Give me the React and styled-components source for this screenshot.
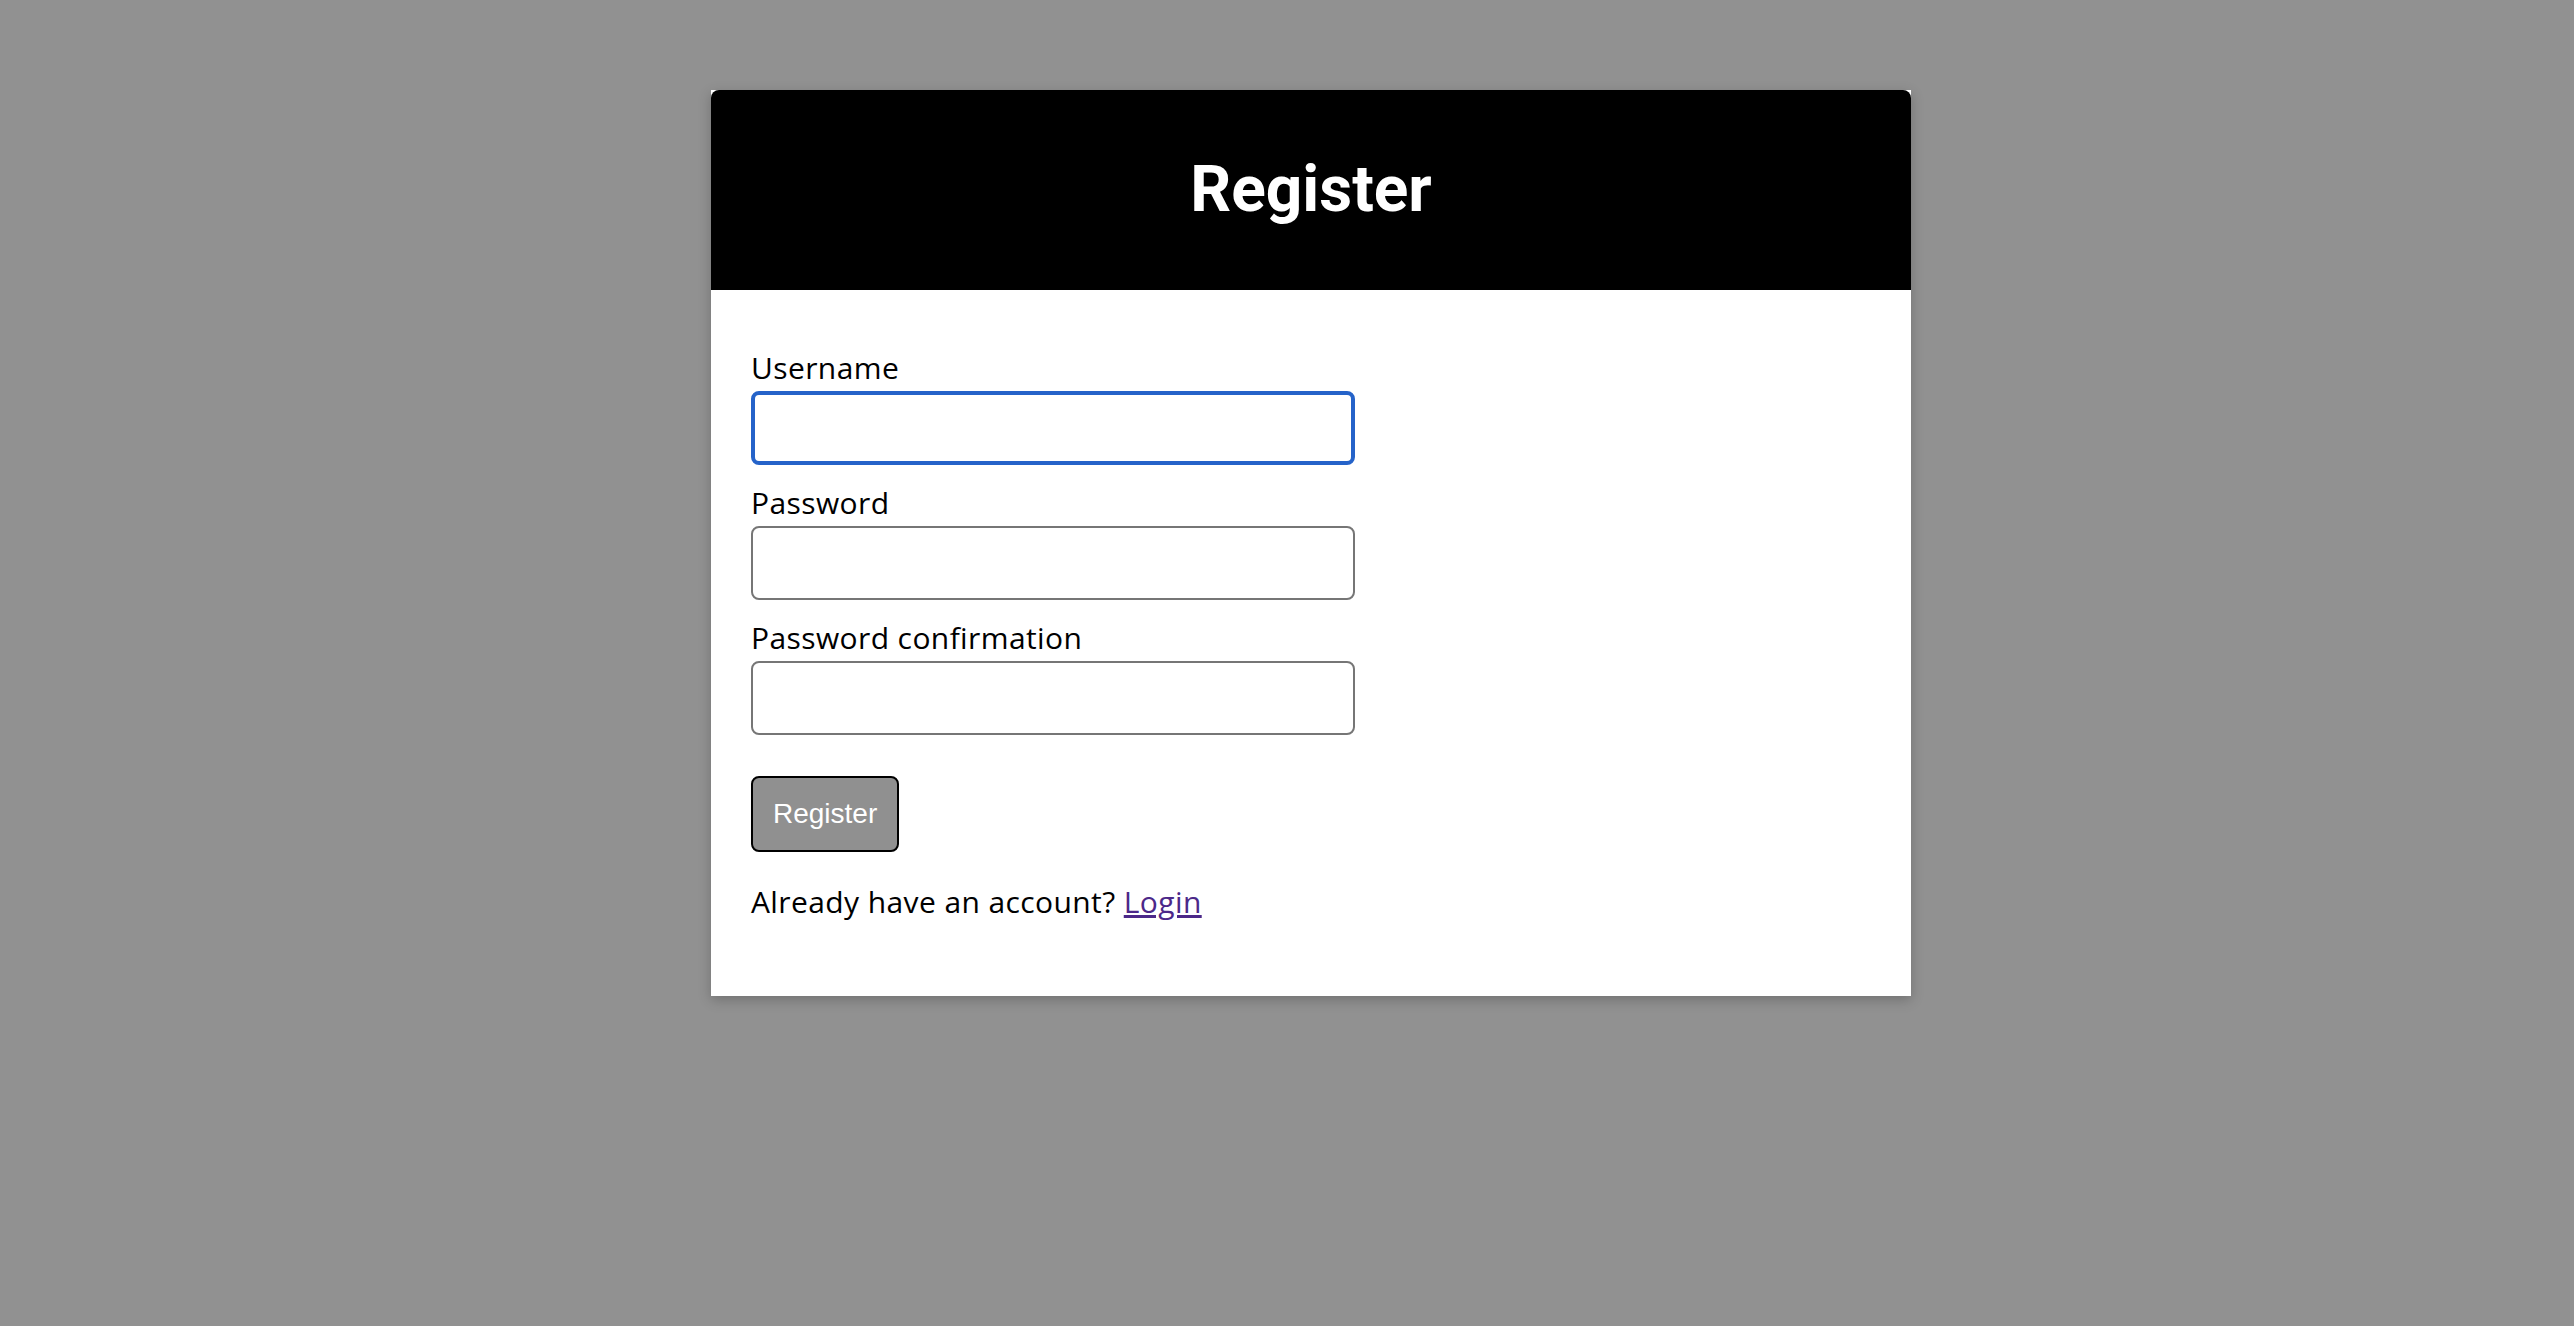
import React from "react";
import styled, { createGlobalStyle } from "styled-components";

const GlobalStyle = createGlobalStyle`
  html, body {
    margin: 0;
    padding: 0;
    background: #919191;
    min-height: 100%;
  }
`;

export default function App() {
  return (
    <>
      <GlobalStyle />
      <Page>
        <Card>
          <Header>
            <Title>Register</Title>
          </Header>
          <Form onSubmit={(e) => e.preventDefault()}>
            <Field>
              <Label htmlFor="username">Username</Label>
              <Input id="username" type="text" $focused />
            </Field>
            <Field>
              <Label htmlFor="password">Password</Label>
              <Input id="password" type="password" />
            </Field>
            <Field>
              <Label htmlFor="password_confirmation">Password confirmation</Label>
              <Input id="password_confirmation" type="password" />
            </Field>
            <SubmitButton type="submit">Register</SubmitButton>
            <Footnote>
              Already have an account? <LoginLink href="#">Login</LoginLink>
            </Footnote>
          </Form>
        </Card>
      </Page>
    </>
  );
}

const Page = styled.div`
  min-height: 1326px;
  box-sizing: border-box;
  padding: 90px 0 0 48px;
`;

const Card = styled.div`
  width: 1200px;
  margin: 0 auto;
  background: #ffffff;
  box-shadow: 0 4px 12px rgba(0, 0, 0, 0.22);
`;

const Header = styled.div`
  height: 200px;
  background: #000000;
  border-radius: 8px 8px 0 0;
  display: flex;
  align-items: center;
  justify-content: center;
`;

const Title = styled.h1`
  margin: 0;
  color: #ffffff;
  font-family: Roboto, "Liberation Sans", sans-serif;
  font-weight: 700;
  font-size: 64px;
  line-height: 1;
`;

const Form = styled.form`
  display: flex;
  flex-direction: column;
  align-items: flex-start;
  padding: 58px 40px 76px;
`;

const Field = styled.div`
  display: flex;
  flex-direction: column;
  margin-bottom: 18px;
`;

const Label = styled.label`
  font-family: "Open Sans", "Noto Sans", sans-serif;
  font-size: 30px;
  letter-spacing: 0.4px;
  line-height: 36px;
  color: #000000;
  padding-top: 2px;
  margin-bottom: 5px;
`;

const Input = styled.input`
  box-sizing: border-box;
  width: 604px;
  height: 74px;
  border-radius: 8px;
  border: ${(p) => (p.$focused ? "4px solid #2563c9" : "2px solid #767676")};
  background: #ffffff;
  font-size: 28px;
  padding: 0 12px;
  outline: none;
`;

const SubmitButton = styled.button`
  box-sizing: border-box;
  margin-top: 23px;
  height: 76px;
  padding: 0 20px;
  background: #909090;
  color: #ffffff;
  border: 2px solid #000000;
  border-radius: 8px;
  font-family: "Liberation Sans", Arial, sans-serif;
  font-size: 28px;
  cursor: pointer;
`;

const Footnote = styled.p`
  margin: 32px 0 0;
  font-family: "Open Sans", "Noto Sans", sans-serif;
  font-size: 30px;
  letter-spacing: 0.4px;
  line-height: 36px;
  color: #000000;
`;

const LoginLink = styled.a`
  color: #4c2889;
  text-decoration: underline;
`;
